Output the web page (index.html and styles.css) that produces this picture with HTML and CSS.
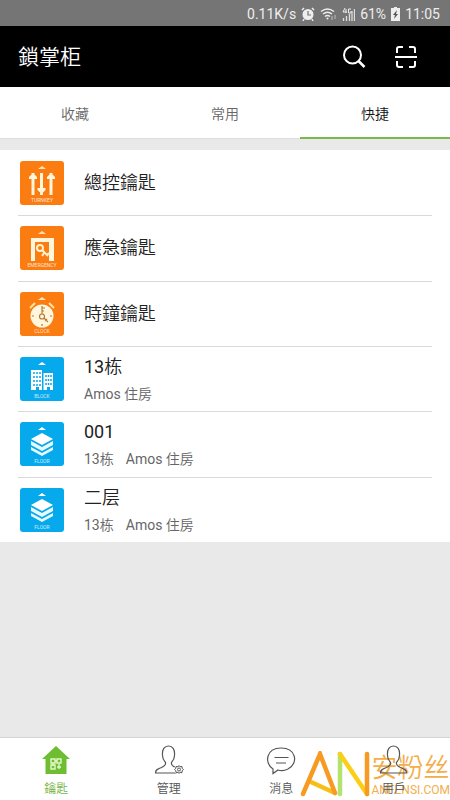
FILE: index.html
```html
<!DOCTYPE html>
<html lang="zh-Hant">
<head>
<meta charset="utf-8">
<meta name="viewport" content="width=device-width, initial-scale=1">
<title>鎖掌柜</title>
<link rel="stylesheet" href="styles.css">
</head>
<body>
<svg class="defs" aria-hidden="true">
  <symbol id="floor" viewBox="0 0 44 44">
    <path d="M18 8l4-3 4 3z" fill="#fff"/>
    <path d="M22 11l11 6-11 6-11-6z" fill="#fff"/>
    <path d="M11 19l11 6 11-6v4l-11 6-11-6zM11 25l11 6 11-6v3l-11 6-11-6z" fill="#e6faff"/>
    <text x="22" y="41" class="tile-text">FLOOR</text>
  </symbol>
  <symbol id="person" viewBox="0 0 30 30">
    <path d="M11.500 17.500C9 15 8.500 12.500 8.500 10.500 8 4 10.500 1 14.500 1s6.500 3 6 9.500c0 2-.5 4.500-3 7-.7 2.500.8 3.500 4 5 3.500 1.500 6 2 6 5.500H1.500c0-3.500 2.500-4 6-5.500 3.200-1.500 4.700-2.500 4-5z"/>
  </symbol>
</svg>
<div class="app">
  <div class="status">
    <span>0.11K/s</span>
    <svg width="14" height="14" viewBox="0 0 14 14"><circle cx="7" cy="7.500" r="5.500" fill="#eee"/><path d="M1 3l2-2M13 3l-2-2M3 12l-1 2M11 12l1 2" stroke="#eee" stroke-width="1.500"/><path d="M7 4v4h3" fill="none" stroke="#757575" stroke-width="1.200"/></svg>
    <svg width="17" height="14" viewBox="0 0 17 14" fill="none" stroke="#eee" stroke-width="1.400"><path d="M1 4.500q6.500-5 13 0M3 7q4.500-3.500 9 0M5 9.500q2.500-2 5 0"/><circle cx="7.500" cy="11.500" r="1" fill="#eee" stroke="none"/><path d="M12 9v4M15 8v4" stroke="#aaa"/></svg>
    <svg width="13" height="14" viewBox="0 0 13 14"><path d="M1.500 14v-3M4.500 14V9M7.500 14V7M10 14V4M12.500 14V2" stroke="#ddd" stroke-width="1.300"/><path d="M3 1L1 5h4M4 2v4M9 2H6.500v4H9V4" fill="none" stroke="#eee"/></svg>
    <span>61%</span>
    <svg width="9" height="14" viewBox="0 0 9 14"><path d="M3 0h3v1h3v13H0V1h3z" fill="#eee"/><path d="M6 3L2 8h2l-1 4 4-5H5z" fill="#555"/></svg>
    <span>11:05</span>
  </div>
  <header class="header">
    <h1 class="title">鎖掌柜</h1>
    <button class="tool" aria-label="搜尋"><svg width="24" height="24" viewBox="0 0 24 24" fill="none" stroke="#fff" stroke-width="2"><circle cx="10.500" cy="10" r="8.500"/><path d="M16.500 16l6 6" stroke-width="2.500"/></svg></button>
    <button class="tool" aria-label="掃描"><svg width="24" height="24" viewBox="0 0 24 24" fill="none" stroke="#fff" stroke-width="2"><path d="M3 8V4q0-2 2-2h4M15 2h4q2 0 2 2v4M3 16v4q0 2 2 2h4M15 22h4q2 0 2-2v-4M1 12h22"/></svg></button>
  </header>
  <nav class="tabs">
    <a class="tab" href="#fav">收藏</a>
    <a class="tab" href="#common">常用</a>
    <a class="tab tab-active" href="#quick">快捷</a>
  </nav>
  <main class="main">
    <ul class="list">
      <li class="row">
        <svg class="tile orange" viewBox="0 0 44 44"><path d="M18 8l4-3 4 3z" fill="#ffe2b8"/><path d="M13 12v22M21.500 12v22M31 12v22" stroke="#fff6dc" stroke-width="3"/><path d="M9 18v-2l2-2h4l2 2v2zM27 18v-2l2-2h4l2 2v2zM17.500 27h8v2l-2 2h-4l-2-2z" fill="#fff6dc"/><text x="22" y="41" class="tile-text">TURNKEY</text></svg>
        <div class="info"><span class="name">總控鑰匙</span></div>
      </li>
      <li class="row">
        <svg class="tile orange" viewBox="0 0 44 44"><path d="M18 8l4-3 4 3z" fill="#ffe2b8"/><path d="M11 35V12h23v23h-5V16H15v19z" fill="#fff6dc"/><g fill="none" stroke="#fff0c8" stroke-width="2"><circle cx="20" cy="22" r="3"/><path d="M22 24l6 6M24 27l-2 3M27 29l2-2"/></g><text x="22" y="41" class="tile-text">EMERGENCY</text></svg>
        <div class="info"><span class="name">應急鑰匙</span></div>
      </li>
      <li class="row">
        <svg class="tile orange" viewBox="0 0 44 44"><path d="M18 8l4-3 4 3z" fill="#ffe2b8"/><circle cx="22" cy="24" r="11.500" fill="#fff6dc"/><path d="M10 16l5-5M29 11l5 5" stroke="#ffe2a0" stroke-width="2"/><g fill="none" stroke="#b57a35" stroke-width="1.200"><path d="M22 14v2M22 32v2M12 24h2M30 24h2M22 22v-6h3M22 19h2M24 26l4 4M27 27l-2 2"/><circle cx="22" cy="24.500" r="2.500"/></g><text x="22" y="41" class="tile-text">CLOCK</text></svg>
        <div class="info"><span class="name">時鐘鑰匙</span></div>
      </li>
      <li class="row">
        <svg class="tile blue" viewBox="0 0 44 44"><path d="M18 8l4-3 4 3zM11 13h11v20h-3v-3h-3v3h-5zM23.500 16H33v17h-3v-3h-3v3h-3.500z" fill="#fff"/><path d="M14 15v14M17 15v14M20 15v14M26 18v11M28.500 18v11M31 18v11" stroke="#00a8ec" stroke-width="1.500" stroke-dasharray="2"/><text x="22" y="41" class="tile-text">BLOCK</text></svg>
        <div class="info"><span class="name">13栋</span><span class="place">Amos 住房</span></div>
      </li>
      <li class="row">
        <svg class="tile blue"><use href="#floor"/></svg>
        <div class="info"><span class="name">001</span><span class="place"><span>13栋</span><span>Amos 住房</span></span></div>
      </li>
      <li class="row">
        <svg class="tile blue"><use href="#floor"/></svg>
        <div class="info"><span class="name">二层</span><span class="place"><span>13栋</span><span>Amos 住房</span></span></div>
      </li>
    </ul>
  </main>
  <nav class="bottom">
    <div class="brand">
      <svg class="brand-logo" viewBox="0 0 70 46" fill="none" stroke-width="4.500" stroke-linecap="round"><path d="M11 31l24 11" stroke="#f8be18"/><path d="M3 43L20 3l15 39" stroke="#f79a22"/><path d="M40 3v40" stroke="#b4e36c"/><path d="M40 3l27 40" stroke="#fbcf16"/><path d="M67 3v40" stroke="#f79a22"/></svg>
      <div class="brand-words"><span class="brand-name">安粉丝</span><span class="brand-url">ANFENSI.COM</span></div>
    </div>
    <a class="item item-active" href="#keys"><svg class="nav-icon" viewBox="0 0 30 30"><path d="M15 1l14 13h-3.500v15h-21V14H1z" fill="#6fbd32"/><path d="M10 14h4v4h-4zM16 14h4v4h-4zM10 20h4v4h-4zM16 22h4M18 19v5M12 18v3M14 16h2" fill="none" stroke="#e4f8c8" stroke-width="1.400"/></svg>鑰匙</a>
    <a class="item" href="#manage"><svg class="nav-icon line" viewBox="0 0 30 30"><use href="#person" width="30" height="30"/><circle cx="25" cy="24.500" r="5" fill="#fff" stroke="none"/><path d="M25 20.500l1 1.300 2-.3.2 1.800 1.300 1.200-1.300 1.200-.2 1.800-2-.3-1 1.300-1-1.300-2 .3-.2-1.800-1.300-1.200 1.300-1.200.2-1.800 2 .3z" stroke-width="1"/><circle cx="25" cy="24.500" r="1.500" stroke-width="1"/></svg>管理</a>
    <a class="item" href="#messages"><svg class="nav-icon line" viewBox="0 0 30 30"><path d="M7 24C-2 18 0 3 15 3s18 15 7 21c-3 1.500-7 2-10 1l-5 3.500zM8.500 12.500h14M10 18h10"/></svg>消息</a>
    <a class="item" href="#user"><svg class="nav-icon line" viewBox="0 0 30 30"><use href="#person" width="30" height="30"/></svg>用戶</a>
  </nav>
</div>
</body>
</html>
```
FILE: styles.css
```css
* {
  box-sizing: border-box;
}

body {
  margin: 0;
  font-family: Roboto, "Noto Sans CJK TC DemiLight", "Noto Sans CJK TC", sans-serif;
  color: #222;
}

a {
  color: inherit;
  text-decoration: none;
}

.defs {
  position: absolute;
  width: 0;
  height: 0;
}

.app {
  display: flex;
  flex-direction: column;
  min-height: 100vh;
  background: #e9e9e9;
}

.status {
  display: flex;
  align-items: center;
  justify-content: flex-end;
  gap: 5px;
  height: 26px;
  padding: 2px 10px 0;
  background: #757575;
  color: #eee;
  font-size: 14px;
}

.header {
  display: flex;
  align-items: center;
  gap: 28px;
  height: 61px;
  padding: 0 32px 0 18px;
  background: #000;
  color: #fff;
}

.title {
  flex: 1;
  margin: 0;
  font-size: 21px;
  font-weight: 350;
  line-height: 32px;
}

.tool {
  padding: 0;
  border: 0;
  background: none;
}

.tool svg {
  display: block;
}

.tabs {
  display: flex;
  height: 52px;
  background: #fff;
  border-bottom: 1px solid #ddd;
}

.tab {
  flex: 1;
  display: flex;
  align-items: center;
  justify-content: center;
  height: 52px;
  padding-top: 2px;
  border-bottom: 2px solid transparent;
  color: #666;
  font-size: 14px;
  font-weight: 350;
}

.tab-active {
  border-color: #79b84a;
  color: #111;
}

.main {
  flex: 1;
  padding-top: 11px;
}

.list {
  display: grid;
  grid-auto-rows: 1fr;
  min-height: 392px;
  margin: 0;
  padding: 0 18px;
  background: #fff;
  list-style: none;
}

.row {
  display: flex;
  align-items: center;
  gap: 20px;
  padding-left: 2px;
}

.row + .row {
  border-top: 1px solid #d9d9d9;
}

.tile {
  width: 44px;
  height: 44px;
  border-radius: 3px;
}

.orange {
  background: #fb7d12;
}

.blue {
  background: #06a9ec;
}

.tile-text {
  fill: #fff;
  fill-opacity: 0.8;
  font-size: 5px;
  text-anchor: middle;
}

.info {
  display: flex;
  flex-direction: column;
  gap: 4px;
}

.name {
  font-size: 18px;
  line-height: 26px;
}

.place {
  display: flex;
  gap: 12px;
  color: #666;
  font-size: 14px;
  line-height: 20px;
}

.bottom {
  position: relative;
  display: flex;
  height: 63px;
  background: #fff;
  border-top: 1px solid #d4d4d4;
}

.item {
  position: relative;
  flex: 1;
  display: flex;
  flex-direction: column;
  align-items: center;
  gap: 5px;
  padding-top: 7px;
  color: #555;
  font-size: 12px;
  line-height: 18px;
}

.item-active {
  color: #72b340;
}

.nav-icon {
  width: 30px;
  height: 30px;
}

.line {
  fill: none;
  stroke: #555;
  stroke-width: 1.2;
}

.brand {
  position: absolute;
  right: 0;
  bottom: 3px;
  display: flex;
  align-items: flex-end;
  gap: 2px;
  color: #f3ae4c;
}

.brand-logo {
  width: 70px;
  height: 46px;
}

.brand-words {
  display: flex;
  flex-direction: column;
}

.brand-name {
  font-size: 26px;
  font-weight: 350;
  line-height: 30px;
}

.brand-url {
  font-size: 12px;
  line-height: 14px;
}
```
